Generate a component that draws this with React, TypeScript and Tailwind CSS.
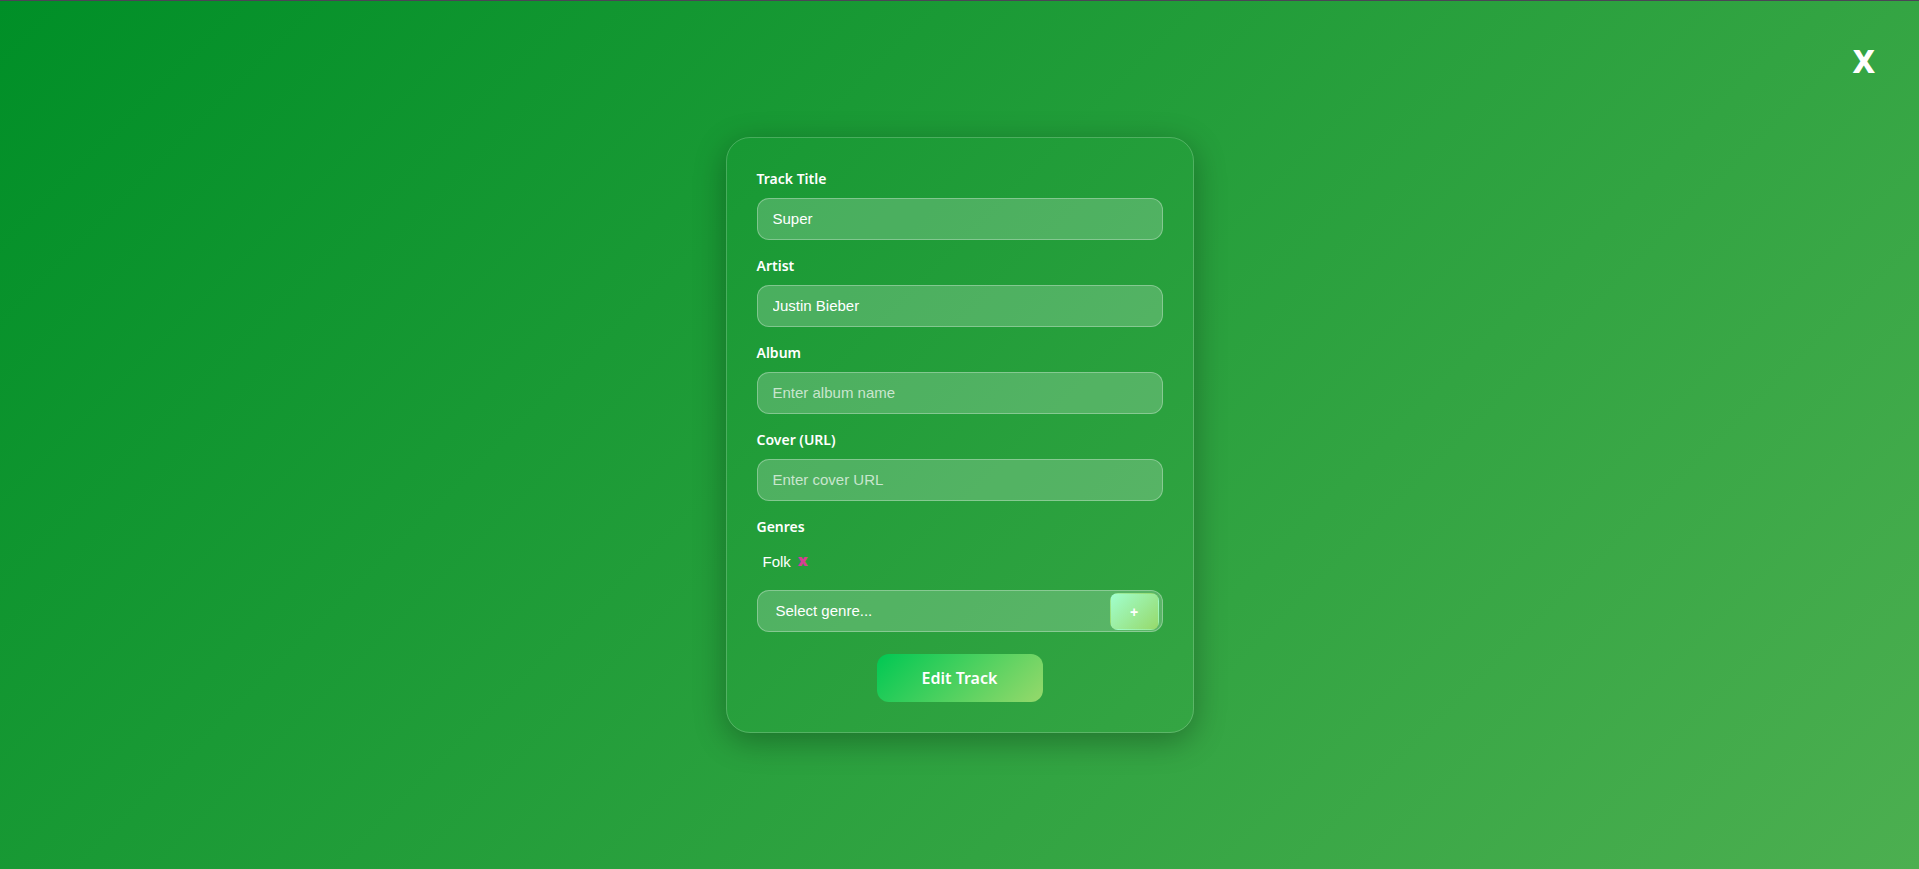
import { useState } from "react";

const fieldClass =
  "h-[42px] w-full rounded-xl border border-white/30 bg-white/20 px-[15px] pb-0.5 font-['Liberation_Sans',Arial,sans-serif] text-[15px] text-white placeholder:text-white/70 focus:outline-none";
const labelClass = "block text-sm leading-[22px] font-semibold text-white";

type FieldProps = {
  id: string;
  label: string;
  placeholder: string;
  initial?: string;
};

function Field({ id, label, placeholder, initial = "" }: FieldProps) {
  const [value, setValue] = useState(initial);
  return (
    <div className="flex flex-col gap-2">
      <label htmlFor={id} className={labelClass}>
        {label}
      </label>
      <input
        id={id}
        type="text"
        className={fieldClass}
        placeholder={placeholder}
        value={value}
        onChange={(e) => setValue(e.target.value)}
      />
    </div>
  );
}

export default function App() {
  return (
    <main className="flex min-h-screen flex-col border-t border-[#4b4556] bg-[linear-gradient(135deg,#008f27,#4caf50)] font-['Noto_Sans','Open_Sans',sans-serif] text-white">
      <header className="flex h-[120px] items-center justify-end px-11">
        <button
          type="button"
          aria-label="Close"
          className="text-[32px] leading-none font-extrabold"
        >
          X
        </button>
      </header>
      <form
        className="mx-auto mt-4 flex w-[468px] max-w-full flex-col gap-[15px] rounded-3xl border border-white/20 p-[30px] shadow-[0_8px_32px_rgba(0,0,0,0.3)]"
        onSubmit={(e) => e.preventDefault()}
      >
        <Field id="title" label="Track Title" placeholder="Enter track title" initial="Super" />
        <Field id="artist" label="Artist" placeholder="Enter artist name" initial="Justin Bieber" />
        <Field id="album" label="Album" placeholder="Enter album name" />
        <Field id="cover" label="Cover (URL)" placeholder="Enter cover URL" />
        <div>
          <label htmlFor="genre" className={labelClass}>
            Genres
          </label>
          <div className="mt-1.5 mb-2.5 flex h-9 items-center gap-[7px] px-1.5 font-['Liberation_Sans',Arial,sans-serif]">
            <span className="text-[15px]">Folk</span>
            <button
              type="button"
              aria-label="Remove Folk"
              className="pb-1 font-['Open_Sans',sans-serif] text-base leading-none font-extrabold text-[#d63f94]"
            >
              x
            </button>
          </div>
          <div className="flex h-[42px] items-center rounded-xl border border-white/30 bg-white/20 p-0.5">
            <select
              id="genre"
              className="h-full min-w-0 grow appearance-none bg-transparent px-4 font-['Liberation_Sans',Arial,sans-serif] text-[15px] text-white focus:outline-none"
            >
              <option>Select genre...</option>
            </select>
            <button
              type="button"
              aria-label="Add genre"
              className="mr-px h-[37px] w-[49px] rounded-lg border border-transparent bg-[linear-gradient(135deg,#a1ffce,#96d96b)] pt-0.5 font-['Liberation_Sans',sans-serif] text-sm font-bold"
            >
              +
            </button>
          </div>
        </div>
        <button
          type="submit"
          className="mx-auto mt-[7px] h-12 w-[166px] rounded-xl bg-[linear-gradient(135deg,#00c853,#96d96b)] text-base font-semibold"
        >
          Edit Track
        </button>
      </form>
    </main>
  );
}
